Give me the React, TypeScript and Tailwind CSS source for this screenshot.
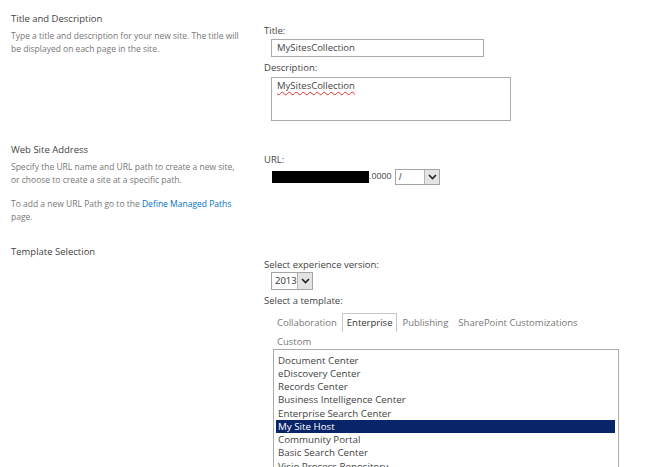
import React from "react";

// Small classic dropdown arrow button
const DropButton: React.FC = () => (
  <div className="flex h-full w-[15px] items-center justify-center border-l border-[#b5b5b5] bg-[#e4e4e4]">
    <svg width="9" height="6" viewBox="0 0 9 6">
      <polyline points="1,1 4.5,4.5 8,1" fill="none" stroke="#222" strokeWidth="1.6" />
    </svg>
  </div>
);

const templates = [
  "Document Center",
  "eDiscovery Center",
  "Records Center",
  "Business Intelligence Center",
  "Enterprise Search Center",
  "My Site Host",
  "Community Portal",
  "Basic Search Center",
  "Visio Process Repository",
];

const tabs = ["Collaboration", "Enterprise", "Publishing", "SharePoint Customizations", "Custom"];

export default function App() {
  return (
    <div className="h-[467px] w-[650px] overflow-hidden bg-white font-['Open_Sans',sans-serif] text-[9.5px] text-[#444]">
      {/* Title and Description */}
      <div className="flex pt-[12px]">
        <div className="w-[264px] shrink-0 pl-[11px]">
          <div className="leading-[14px]">Title and Description</div>
          <div className="mt-[3px] whitespace-nowrap text-[8.5px] leading-[13px] text-[#777]">
            Type a title and description for your new site. The title will
            <br />
            be displayed on each page in the site.
          </div>
        </div>
        <div className="pt-[12px]">
          <div className="leading-[14px]">Title:</div>
          <div className="ml-[7px] mt-[1px] h-[18px] w-[213px] border border-[#ababab] px-[5px] leading-[16px]">
            MySitesCollection
          </div>
          <div className="mt-[4px] leading-[14px]">Description:</div>
          <div className="ml-[7px] mt-[2px] h-[44px] w-[240px] border border-[#ababab] px-[5px] pt-[1px] leading-[14px]">
            <span className="underline decoration-[#e03030] decoration-wavy decoration-[1px] underline-offset-[2px]">
              MySitesCollection
            </span>
          </div>
        </div>
      </div>

      {/* Web Site Address */}
      <div className="mt-[22px] flex">
        <div className="w-[264px] shrink-0 pl-[11px]">
          <div className="leading-[14px]">Web Site Address</div>
          <div className="mt-[3px] whitespace-nowrap text-[8.5px] leading-[13px] text-[#777]">
            Specify the URL name and URL path to create a new site,
            <br />
            or choose to create a site at a specific path.
          </div>
          <div className="mt-[11px] whitespace-nowrap text-[8.5px] leading-[13px] text-[#777]">
            To add a new URL Path go to the <span className="text-[#0072c6]">Define Managed Paths</span>
            <br />
            page.
          </div>
        </div>
        <div className="pt-[10px]">
          <div className="leading-[14px]">URL:</div>
          <div className="mt-[2px] flex h-[16px] items-center">
            <div className="ml-[8px] h-[12px] w-[97px] bg-black" />
            <span className="w-[25px] font-['Liberation_Sans',sans-serif] text-[9px] text-[#555]">.0000</span>
            <div className="ml-[1px] flex h-[16px] w-[45px] border border-[#a5a5a5]">
              <div className="flex-1 pl-[3px] font-['Liberation_Sans',sans-serif] text-[9px] leading-[14px] text-[#333]">/</div>
              <DropButton />
            </div>
          </div>
        </div>
      </div>

      {/* Template Selection */}
      <div className="mt-[22px] flex">
        <div className="w-[264px] shrink-0 pl-[11px]">
          <div className="leading-[14px]">Template Selection</div>
        </div>
        <div className="pt-[13px]">
          <div className="leading-[14px]">Select experience version:</div>
          <div className="ml-[7px] flex h-[18px] w-[42px] border border-[#a5a5a5]">
            <div className="flex-1 pl-[3px] leading-[16px] text-[#333]">2013</div>
            <DropButton />
          </div>
          <div className="mt-[4px] leading-[14px]">Select a template:</div>
          <div className="ml-[8px] mt-[5px] flex w-[346px] flex-wrap">
            {tabs.map((t) => (
              <div
                key={t}
                className={
                  t === "Enterprise"
                    ? "h-[19px] border border-b-0 border-[#c8c8c8] px-[4px] leading-[17px] text-[#333]"
                    : "h-[19px] border border-transparent px-[4px] leading-[17px] text-[#777]"
                }
              >
                {t}
              </div>
            ))}
          </div>
          <div className="-mt-[2px] ml-[9px] h-[140px] w-[346px] border border-[#ababab] px-[2px] pt-[3.5px] text-[9.75px]">
            {templates.map((t) => (
              <div
                key={t}
                className={
                  t === "My Site Host"
                    ? "mr-[1px] h-[13.25px] bg-[#0a246a] px-[2px] leading-[13.25px] text-white"
                    : "h-[13.25px] px-[2px] leading-[13.25px] text-[#444]"
                }
              >
                {t}
              </div>
            ))}
          </div>
        </div>
      </div>
    </div>
  );
}
